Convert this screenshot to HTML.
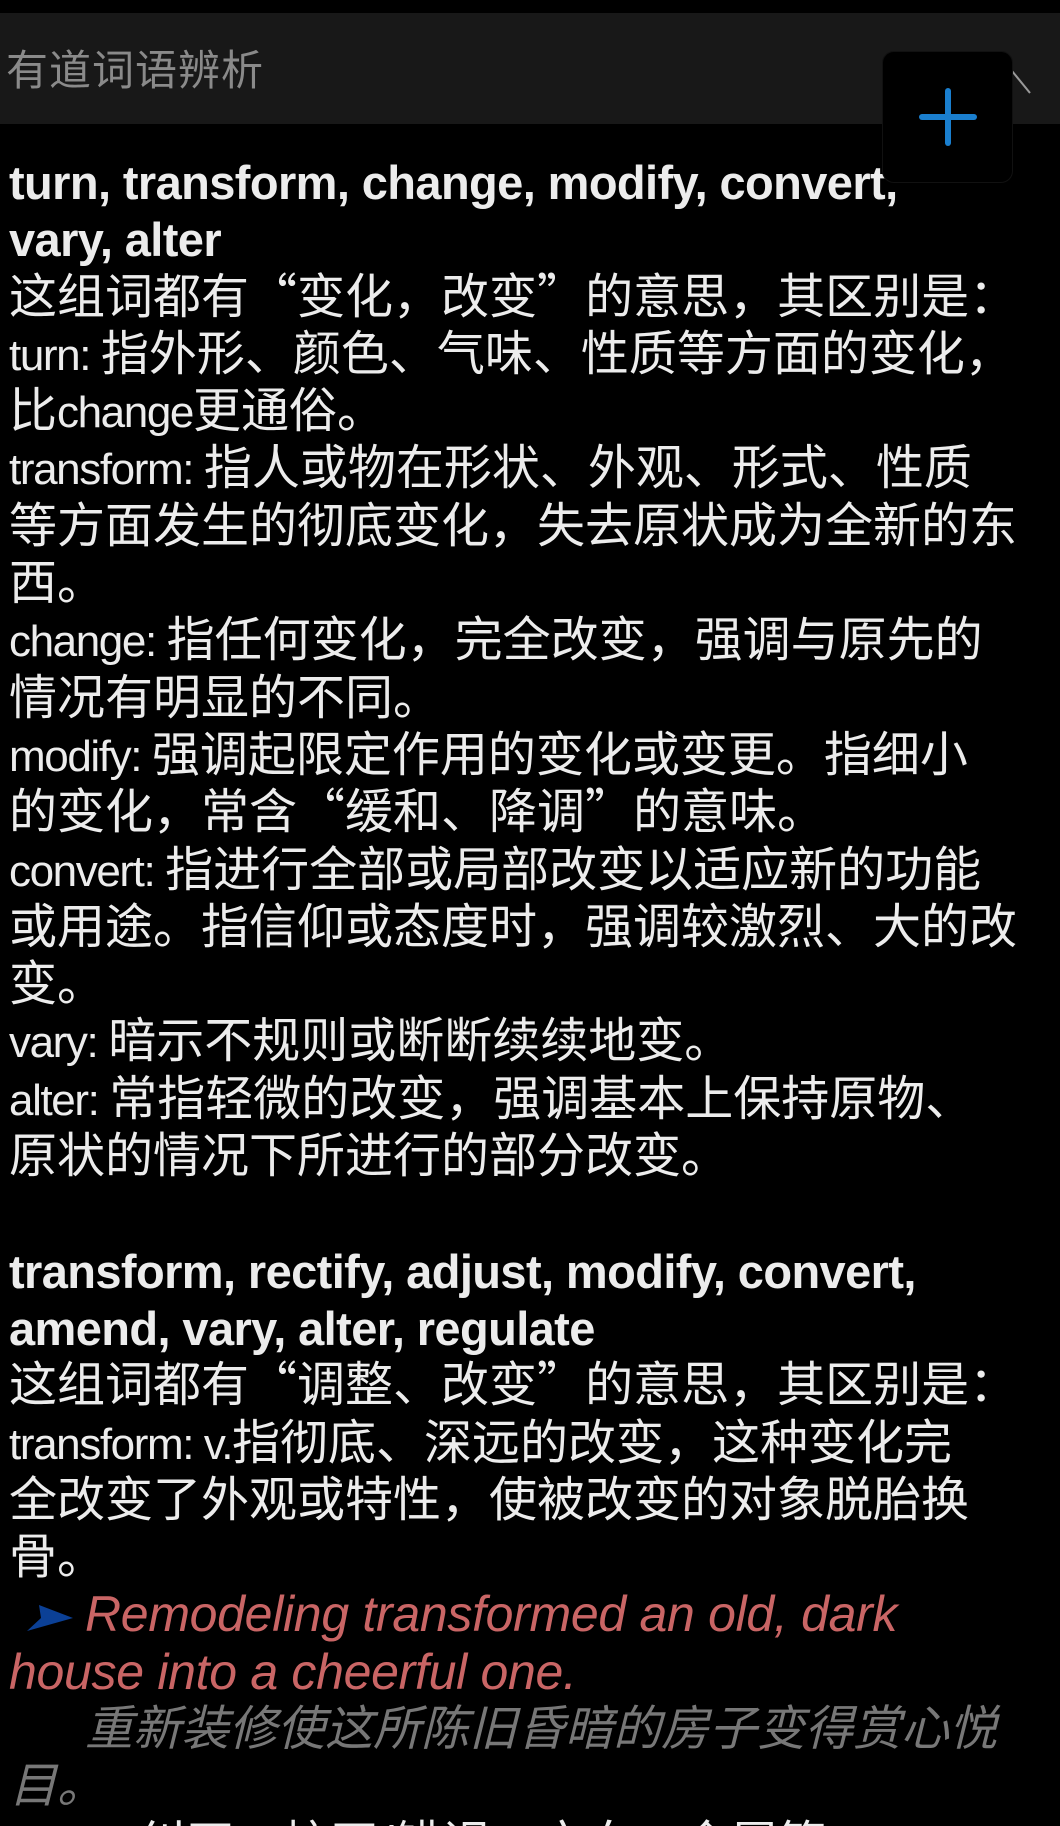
<!DOCTYPE html>
<html><head><meta charset="utf-8">
<style>
html,body{margin:0;padding:0;background:#000;width:1060px;height:1826px;overflow:hidden}
body{position:relative;font-family:"Liberation Sans","Noto Sans CJK SC",sans-serif;color:#ececec}
.hdr{position:absolute;left:0;top:13px;width:1060px;height:111px;background:#181818}
.title{position:absolute;left:6px;top:30px;font-size:42px;line-height:50px;color:#8a8a8a;font-family:"Noto Sans CJK SC",sans-serif;letter-spacing:1px}
.chev{position:absolute;left:1008px;top:50px;width:26px;height:34px}
.btn{position:absolute;left:882px;top:51px;width:129px;height:130px;background:#000;border-radius:12px;border:1px solid #111}
.btn .h{position:absolute;left:36px;top:62px;width:58px;height:6px;background:#1a7fcf;border-radius:3px}
.btn .v{position:absolute;left:62px;top:36px;width:6px;height:58px;background:#1a7fcf;border-radius:3px}
.c{position:absolute;left:9px;top:154px;width:1050px}
.l{height:57.3px;line-height:57.3px;font-size:48px;white-space:nowrap;position:relative;overflow:visible}
.b{font-weight:bold;font-size:47px;letter-spacing:-0.6px}
.e{font-size:44px;letter-spacing:-1.4px}
.q{font-family:"Noto Sans CJK SC",sans-serif;line-height:0}
.ex{color:#c96565;font-style:italic;font-size:50px;letter-spacing:-0.3px}
.tr{color:#777;font-style:italic}
.arr{position:absolute;left:18px;top:19px;width:46px;height:26px}
</style></head><body>
<div class="hdr"><div class="title">有道词语辨析</div>
<svg class="chev" viewBox="0 0 26 34"><path d="M4 8 L22 30" stroke="#999" stroke-width="2" fill="none"/></svg></div>
<div class="c">
<div class="l b">turn, transform, change, modify, convert,</div>
<div class="l b">vary, alter</div>
<div class="l">这组词都有<span class="q">“</span>变化，改变<span class="q">”</span>的意思，其区别是：</div>
<div class="l"><span class="e">turn: </span>指外形、颜色、气味、性质等方面的变化，</div>
<div class="l">比<span class="e">change</span>更通俗。</div>
<div class="l"><span class="e">transform: </span>指人或物在形状、外观、形式、性质</div>
<div class="l">等方面发生的彻底变化，失去原状成为全新的东</div>
<div class="l">西。</div>
<div class="l"><span class="e">change: </span>指任何变化，完全改变，强调与原先的</div>
<div class="l">情况有明显的不同。</div>
<div class="l"><span class="e">modify: </span>强调起限定作用的变化或变更。指细小</div>
<div class="l">的变化，常含<span class="q">“</span>缓和、降调<span class="q">”</span>的意味。</div>
<div class="l"><span class="e">convert: </span>指进行全部或局部改变以适应新的功能</div>
<div class="l">或用途。指信仰或态度时，强调较激烈、大的改</div>
<div class="l">变。</div>
<div class="l"><span class="e">vary: </span>暗示不规则或断断续续地变。</div>
<div class="l"><span class="e">alter: </span>常指轻微的改变，强调基本上保持原物、</div>
<div class="l">原状的情况下所进行的部分改变。</div>
<div class="l"></div>
<div class="l b">transform, rectify, adjust, modify, convert,</div>
<div class="l b">amend, vary, alter, regulate</div>
<div class="l">这组词都有<span class="q">“</span>调整、改变<span class="q">”</span>的意思，其区别是：</div>
<div class="l"><span class="e">transform: v.</span>指彻底、深远的改变，这种变化完</div>
<div class="l">全改变了外观或特性，使被改变的对象脱胎换</div>
<div class="l">骨。</div>
<div class="l ex"><svg class="arr" viewBox="0 0 46 26"><path d="M12 0 L46 13 L0 26 L14 13 Z" fill="#0b4096"/></svg><span style="padding-left:76px">Remodeling transformed an old, dark</span></div>
<div class="l ex">house into a cheerful one.</div>
<div class="l tr"><span style="padding-left:76px">重新装修使这所陈旧昏暗的房子变得赏心悦</span></div>
<div class="l tr">目。</div>
<div class="l"><span class="e">rectify: </span>纠正、校正(错误、方向、金属等</div>
</div>
<div class="btn"><div class="h"></div><div class="v"></div></div>
</body></html>
